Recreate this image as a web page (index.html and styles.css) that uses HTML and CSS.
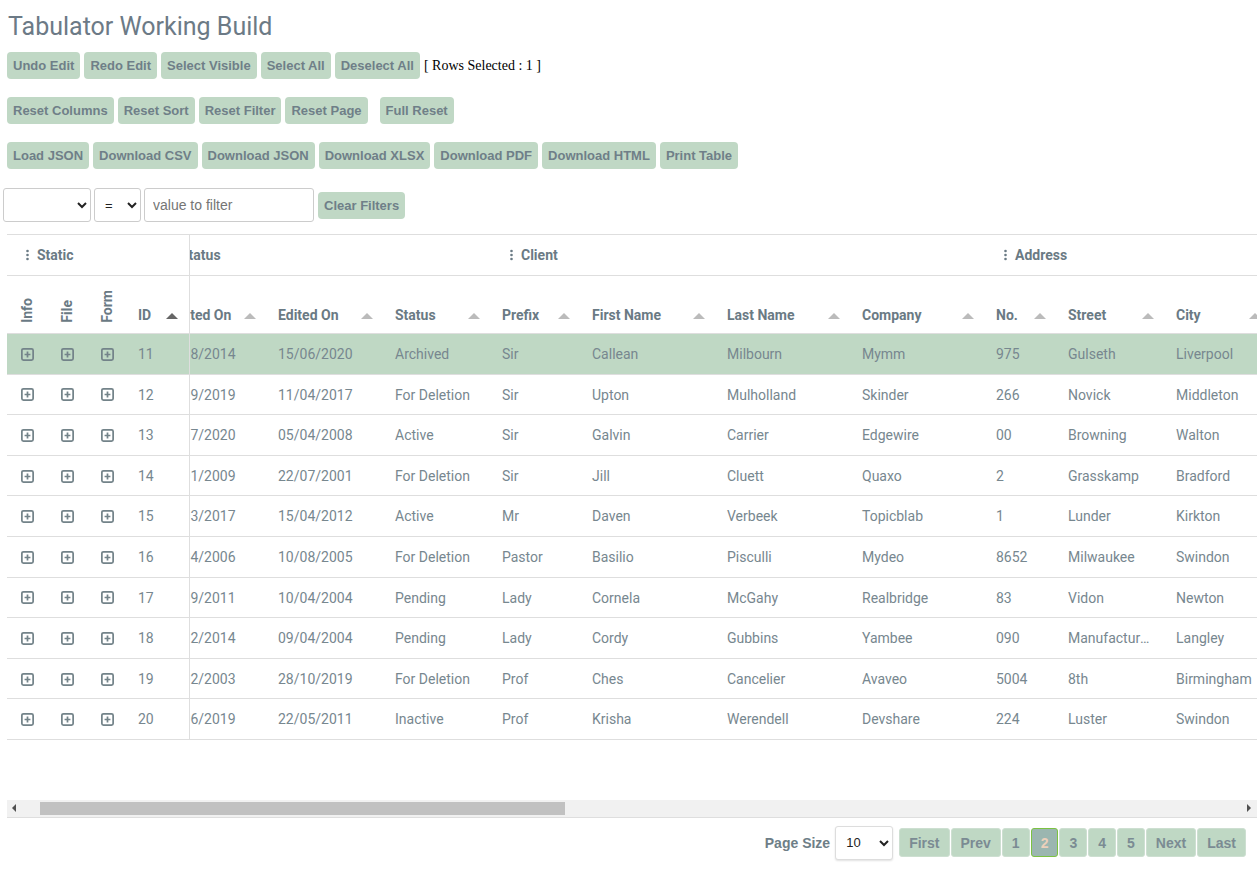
FILE: index.html
```html
<!DOCTYPE html>
<html>
<head>
<meta charset="utf-8">
<title>Tabulator Working Build</title>
<link rel="stylesheet" href="styles.css">
</head>
<body>
<div class="page">
  <h1 class="title">Tabulator Working Build</h1>
  <div class="toolbar">
    <div class="btn-row">
      <button class="btn">Undo Edit</button>
      <button class="btn">Redo Edit</button>
      <button class="btn">Select Visible</button>
      <button class="btn">Select All</button>
      <button class="btn">Deselect All</button>
      <span class="sel-count">[ Rows Selected : 1 ]</span>
    </div>
    <div class="btn-row">
      <button class="btn">Reset Columns</button>
      <button class="btn">Reset Sort</button>
      <button class="btn">Reset Filter</button>
      <button class="btn">Reset Page</button>
      <button class="btn btn-sep">Full Reset</button>
    </div>
    <div class="btn-row">
      <button class="btn">Load JSON</button>
      <button class="btn">Download CSV</button>
      <button class="btn">Download JSON</button>
      <button class="btn">Download XLSX</button>
      <button class="btn">Download PDF</button>
      <button class="btn">Download HTML</button>
      <button class="btn">Print Table</button>
    </div>
  </div>
  <div class="filter-row">
    <select class="fsel fsel-field"><option></option></select>
    <select class="fsel fsel-type"><option>=</option></select>
    <input class="finput" type="text" placeholder="value to filter">
    <button class="btn">Clear Filters</button>
  </div>

  <div class="table">
    <div class="panes">
      <div class="frozen">
        <div class="grp-row">
          <div class="grp g-static"><svg class="dots" width="3" height="12" viewBox="0 0 3 12"><circle cx="1.5" cy="2" r="1.3"/><circle cx="1.5" cy="6" r="1.3"/><circle cx="1.5" cy="10" r="1.3"/></svg>Static</div>
        </div>
        <div class="col-row">
          <div class="hcell vcell c-icon"><span class="vtitle">Info</span></div>
          <div class="hcell vcell c-icon"><span class="vtitle">File</span></div>
          <div class="hcell vcell c-icon"><span class="vtitle">Form</span></div>
          <div class="hcell c-id"><span>ID</span><i class="arrow arrow-active"></i></div>
        </div>
        <div class="row sel"><div class="icell"><svg class="plus" viewBox="0 0 12 12"><rect x="0.8" y="0.8" width="10.4" height="10.4" rx="1.5"/><path d="M3.3 6h5.4M6 3.3v5.4"/></svg></div><div class="icell"><svg class="plus" viewBox="0 0 12 12"><rect x="0.8" y="0.8" width="10.4" height="10.4" rx="1.5"/><path d="M3.3 6h5.4M6 3.3v5.4"/></svg></div><div class="icell"><svg class="plus" viewBox="0 0 12 12"><rect x="0.8" y="0.8" width="10.4" height="10.4" rx="1.5"/><path d="M3.3 6h5.4M6 3.3v5.4"/></svg></div><div class="cell c-id">11</div></div>
        <div class="row"><div class="icell"><svg class="plus" viewBox="0 0 12 12"><rect x="0.8" y="0.8" width="10.4" height="10.4" rx="1.5"/><path d="M3.3 6h5.4M6 3.3v5.4"/></svg></div><div class="icell"><svg class="plus" viewBox="0 0 12 12"><rect x="0.8" y="0.8" width="10.4" height="10.4" rx="1.5"/><path d="M3.3 6h5.4M6 3.3v5.4"/></svg></div><div class="icell"><svg class="plus" viewBox="0 0 12 12"><rect x="0.8" y="0.8" width="10.4" height="10.4" rx="1.5"/><path d="M3.3 6h5.4M6 3.3v5.4"/></svg></div><div class="cell c-id">12</div></div>
        <div class="row"><div class="icell"><svg class="plus" viewBox="0 0 12 12"><rect x="0.8" y="0.8" width="10.4" height="10.4" rx="1.5"/><path d="M3.3 6h5.4M6 3.3v5.4"/></svg></div><div class="icell"><svg class="plus" viewBox="0 0 12 12"><rect x="0.8" y="0.8" width="10.4" height="10.4" rx="1.5"/><path d="M3.3 6h5.4M6 3.3v5.4"/></svg></div><div class="icell"><svg class="plus" viewBox="0 0 12 12"><rect x="0.8" y="0.8" width="10.4" height="10.4" rx="1.5"/><path d="M3.3 6h5.4M6 3.3v5.4"/></svg></div><div class="cell c-id">13</div></div>
        <div class="row"><div class="icell"><svg class="plus" viewBox="0 0 12 12"><rect x="0.8" y="0.8" width="10.4" height="10.4" rx="1.5"/><path d="M3.3 6h5.4M6 3.3v5.4"/></svg></div><div class="icell"><svg class="plus" viewBox="0 0 12 12"><rect x="0.8" y="0.8" width="10.4" height="10.4" rx="1.5"/><path d="M3.3 6h5.4M6 3.3v5.4"/></svg></div><div class="icell"><svg class="plus" viewBox="0 0 12 12"><rect x="0.8" y="0.8" width="10.4" height="10.4" rx="1.5"/><path d="M3.3 6h5.4M6 3.3v5.4"/></svg></div><div class="cell c-id">14</div></div>
        <div class="row"><div class="icell"><svg class="plus" viewBox="0 0 12 12"><rect x="0.8" y="0.8" width="10.4" height="10.4" rx="1.5"/><path d="M3.3 6h5.4M6 3.3v5.4"/></svg></div><div class="icell"><svg class="plus" viewBox="0 0 12 12"><rect x="0.8" y="0.8" width="10.4" height="10.4" rx="1.5"/><path d="M3.3 6h5.4M6 3.3v5.4"/></svg></div><div class="icell"><svg class="plus" viewBox="0 0 12 12"><rect x="0.8" y="0.8" width="10.4" height="10.4" rx="1.5"/><path d="M3.3 6h5.4M6 3.3v5.4"/></svg></div><div class="cell c-id">15</div></div>
        <div class="row"><div class="icell"><svg class="plus" viewBox="0 0 12 12"><rect x="0.8" y="0.8" width="10.4" height="10.4" rx="1.5"/><path d="M3.3 6h5.4M6 3.3v5.4"/></svg></div><div class="icell"><svg class="plus" viewBox="0 0 12 12"><rect x="0.8" y="0.8" width="10.4" height="10.4" rx="1.5"/><path d="M3.3 6h5.4M6 3.3v5.4"/></svg></div><div class="icell"><svg class="plus" viewBox="0 0 12 12"><rect x="0.8" y="0.8" width="10.4" height="10.4" rx="1.5"/><path d="M3.3 6h5.4M6 3.3v5.4"/></svg></div><div class="cell c-id">16</div></div>
        <div class="row"><div class="icell"><svg class="plus" viewBox="0 0 12 12"><rect x="0.8" y="0.8" width="10.4" height="10.4" rx="1.5"/><path d="M3.3 6h5.4M6 3.3v5.4"/></svg></div><div class="icell"><svg class="plus" viewBox="0 0 12 12"><rect x="0.8" y="0.8" width="10.4" height="10.4" rx="1.5"/><path d="M3.3 6h5.4M6 3.3v5.4"/></svg></div><div class="icell"><svg class="plus" viewBox="0 0 12 12"><rect x="0.8" y="0.8" width="10.4" height="10.4" rx="1.5"/><path d="M3.3 6h5.4M6 3.3v5.4"/></svg></div><div class="cell c-id">17</div></div>
        <div class="row"><div class="icell"><svg class="plus" viewBox="0 0 12 12"><rect x="0.8" y="0.8" width="10.4" height="10.4" rx="1.5"/><path d="M3.3 6h5.4M6 3.3v5.4"/></svg></div><div class="icell"><svg class="plus" viewBox="0 0 12 12"><rect x="0.8" y="0.8" width="10.4" height="10.4" rx="1.5"/><path d="M3.3 6h5.4M6 3.3v5.4"/></svg></div><div class="icell"><svg class="plus" viewBox="0 0 12 12"><rect x="0.8" y="0.8" width="10.4" height="10.4" rx="1.5"/><path d="M3.3 6h5.4M6 3.3v5.4"/></svg></div><div class="cell c-id">18</div></div>
        <div class="row"><div class="icell"><svg class="plus" viewBox="0 0 12 12"><rect x="0.8" y="0.8" width="10.4" height="10.4" rx="1.5"/><path d="M3.3 6h5.4M6 3.3v5.4"/></svg></div><div class="icell"><svg class="plus" viewBox="0 0 12 12"><rect x="0.8" y="0.8" width="10.4" height="10.4" rx="1.5"/><path d="M3.3 6h5.4M6 3.3v5.4"/></svg></div><div class="icell"><svg class="plus" viewBox="0 0 12 12"><rect x="0.8" y="0.8" width="10.4" height="10.4" rx="1.5"/><path d="M3.3 6h5.4M6 3.3v5.4"/></svg></div><div class="cell c-id">19</div></div>
        <div class="row"><div class="icell"><svg class="plus" viewBox="0 0 12 12"><rect x="0.8" y="0.8" width="10.4" height="10.4" rx="1.5"/><path d="M3.3 6h5.4M6 3.3v5.4"/></svg></div><div class="icell"><svg class="plus" viewBox="0 0 12 12"><rect x="0.8" y="0.8" width="10.4" height="10.4" rx="1.5"/><path d="M3.3 6h5.4M6 3.3v5.4"/></svg></div><div class="icell"><svg class="plus" viewBox="0 0 12 12"><rect x="0.8" y="0.8" width="10.4" height="10.4" rx="1.5"/><path d="M3.3 6h5.4M6 3.3v5.4"/></svg></div><div class="cell c-id">20</div></div>
      </div>

      <div class="scroller">
        <div class="scroll-inner">
          <div class="grp-row">
            <div class="grp g-status"><svg class="dots" width="3" height="12" viewBox="0 0 3 12"><circle cx="1.5" cy="2" r="1.3"/><circle cx="1.5" cy="6" r="1.3"/><circle cx="1.5" cy="10" r="1.3"/></svg>Status</div>
            <div class="grp g-client"><svg class="dots" width="3" height="12" viewBox="0 0 3 12"><circle cx="1.5" cy="2" r="1.3"/><circle cx="1.5" cy="6" r="1.3"/><circle cx="1.5" cy="10" r="1.3"/></svg>Client</div>
            <div class="grp g-address"><svg class="dots" width="3" height="12" viewBox="0 0 3 12"><circle cx="1.5" cy="2" r="1.3"/><circle cx="1.5" cy="6" r="1.3"/><circle cx="1.5" cy="10" r="1.3"/></svg>Address</div>
          </div>
          <div class="col-row">
            <div class="hcell c-created"><span>Created On</span><i class="arrow"></i></div>
            <div class="hcell c-edited"><span>Edited On</span><i class="arrow"></i></div>
            <div class="hcell c-status"><span>Status</span><i class="arrow"></i></div>
            <div class="hcell c-prefix"><span>Prefix</span><i class="arrow"></i></div>
            <div class="hcell c-first"><span>First Name</span><i class="arrow"></i></div>
            <div class="hcell c-last"><span>Last Name</span><i class="arrow"></i></div>
            <div class="hcell c-company"><span>Company</span><i class="arrow"></i></div>
            <div class="hcell c-no"><span>No.</span><i class="arrow"></i></div>
            <div class="hcell c-street"><span>Street</span><i class="arrow"></i></div>
            <div class="hcell c-city"><span>City</span><i class="arrow"></i></div>
          </div>
          <div class="row sel"><div class="cell c-created">12/08/2014</div><div class="cell c-edited">15/06/2020</div><div class="cell c-status">Archived</div><div class="cell c-prefix">Sir</div><div class="cell c-first">Callean</div><div class="cell c-last">Milbourn</div><div class="cell c-company">Mymm</div><div class="cell c-no">975</div><div class="cell c-street">Gulseth</div><div class="cell c-city">Liverpool</div></div>
          <div class="row"><div class="cell c-created">14/09/2019</div><div class="cell c-edited">11/04/2017</div><div class="cell c-status">For Deletion</div><div class="cell c-prefix">Sir</div><div class="cell c-first">Upton</div><div class="cell c-last">Mulholland</div><div class="cell c-company">Skinder</div><div class="cell c-no">266</div><div class="cell c-street">Novick</div><div class="cell c-city">Middleton</div></div>
          <div class="row"><div class="cell c-created">21/07/2020</div><div class="cell c-edited">05/04/2008</div><div class="cell c-status">Active</div><div class="cell c-prefix">Sir</div><div class="cell c-first">Galvin</div><div class="cell c-last">Carrier</div><div class="cell c-company">Edgewire</div><div class="cell c-no">00</div><div class="cell c-street">Browning</div><div class="cell c-city">Walton</div></div>
          <div class="row"><div class="cell c-created">23/01/2009</div><div class="cell c-edited">22/07/2001</div><div class="cell c-status">For Deletion</div><div class="cell c-prefix">Sir</div><div class="cell c-first">Jill</div><div class="cell c-last">Cluett</div><div class="cell c-company">Quaxo</div><div class="cell c-no">2</div><div class="cell c-street">Grasskamp</div><div class="cell c-city">Bradford</div></div>
          <div class="row"><div class="cell c-created">18/03/2017</div><div class="cell c-edited">15/04/2012</div><div class="cell c-status">Active</div><div class="cell c-prefix">Mr</div><div class="cell c-first">Daven</div><div class="cell c-last">Verbeek</div><div class="cell c-company">Topicblab</div><div class="cell c-no">1</div><div class="cell c-street">Lunder</div><div class="cell c-city">Kirkton</div></div>
          <div class="row"><div class="cell c-created">25/04/2006</div><div class="cell c-edited">10/08/2005</div><div class="cell c-status">For Deletion</div><div class="cell c-prefix">Pastor</div><div class="cell c-first">Basilio</div><div class="cell c-last">Pisculli</div><div class="cell c-company">Mydeo</div><div class="cell c-no">8652</div><div class="cell c-street">Milwaukee</div><div class="cell c-city">Swindon</div></div>
          <div class="row"><div class="cell c-created">13/09/2011</div><div class="cell c-edited">10/04/2004</div><div class="cell c-status">Pending</div><div class="cell c-prefix">Lady</div><div class="cell c-first">Cornela</div><div class="cell c-last">McGahy</div><div class="cell c-company">Realbridge</div><div class="cell c-no">83</div><div class="cell c-street">Vidon</div><div class="cell c-city">Newton</div></div>
          <div class="row"><div class="cell c-created">16/02/2014</div><div class="cell c-edited">09/04/2004</div><div class="cell c-status">Pending</div><div class="cell c-prefix">Lady</div><div class="cell c-first">Cordy</div><div class="cell c-last">Gubbins</div><div class="cell c-company">Yambee</div><div class="cell c-no">090</div><div class="cell c-street">Manufacturers</div><div class="cell c-city">Langley</div></div>
          <div class="row"><div class="cell c-created">11/02/2003</div><div class="cell c-edited">28/10/2019</div><div class="cell c-status">For Deletion</div><div class="cell c-prefix">Prof</div><div class="cell c-first">Ches</div><div class="cell c-last">Cancelier</div><div class="cell c-company">Avaveo</div><div class="cell c-no">5004</div><div class="cell c-street">8th</div><div class="cell c-city">Birmingham</div></div>
          <div class="row"><div class="cell c-created">27/06/2019</div><div class="cell c-edited">22/05/2011</div><div class="cell c-status">Inactive</div><div class="cell c-prefix">Prof</div><div class="cell c-first">Krisha</div><div class="cell c-last">Werendell</div><div class="cell c-company">Devshare</div><div class="cell c-no">224</div><div class="cell c-street">Luster</div><div class="cell c-city">Swindon</div></div>
        </div>
      </div>
    </div>

    <div class="hscroll">
      <div class="sb-btn sb-left"><i class="tri-left"></i></div>
      <div class="sb-thumb"></div>
      <div class="sb-btn sb-right"><i class="tri-right"></i></div>
    </div>

    <div class="footer">
      <span class="ps-label">Page Size</span>
      <select class="ps-select"><option>10</option></select>
      <div class="pager">
        <button class="pg-btn">First</button>
        <button class="pg-btn">Prev</button>
        <button class="pg-btn">1</button>
        <button class="pg-btn active">2</button>
        <button class="pg-btn">3</button>
        <button class="pg-btn">4</button>
        <button class="pg-btn">5</button>
        <button class="pg-btn">Next</button>
        <button class="pg-btn">Last</button>
      </div>
    </div>
  </div>
</div>
</body>
</html>
```

FILE: styles.css
```css
* { box-sizing: border-box; }

body {
  margin: 0;
  background: #fff;
  font-family: Roboto, "Liberation Sans", sans-serif;
  overflow: hidden;
}

.page { padding-left: 7px; }

.title {
  margin: 11px 0 0 1px;
  font-size: 25px;
  line-height: 31px;
  font-weight: 400;
  color: #6c7a86;
}

.toolbar {
  display: flex;
  flex-direction: column;
  gap: 18px;
  margin-top: 10px;
}

.btn-row {
  display: flex;
  align-items: center;
  gap: 4px;
}

.btn {
  height: 27px;
  padding: 0 6px;
  border: none;
  border-radius: 4px;
  background: #c0d8c5;
  color: #6f7f88;
  font: bold 13px "Liberation Sans", Arial, sans-serif;
  cursor: pointer;
}

.btn-sep { margin-left: 8px; }

.sel-count {
  font: 14px "Liberation Serif", "Times New Roman", serif;
  color: #000;
}

.filter-row {
  display: flex;
  align-items: center;
  gap: 3px;
  margin-top: 19px;
  margin-left: -4px;
}

.filter-row .btn { margin-left: 1px; }

.fsel {
  height: 34px;
  border: 1px solid #ccc;
  border-radius: 3px;
  background: #fff;
  color: #222;
  font: 13px "Liberation Sans", Arial, sans-serif;
}

.fsel-field { width: 88px; }
.fsel-type { width: 47px; padding-left: 6px; }

.finput {
  width: 170px;
  height: 34px;
  border: 1px solid #ccc;
  border-radius: 3px;
  padding: 0 8px;
  font: 14px "Liberation Sans", Arial, sans-serif;
  color: #333;
}

.finput::placeholder { color: #757575; }

/* table */
.table {
  margin-top: 12px;
  width: 1250px;
  border-top: 1px solid #dedede;
}

.panes { display: flex; }

.frozen {
  flex: none;
  width: 183px;
  border-right: 1px solid #dedede;
}

.scroller {
  flex: 1;
  min-width: 0;
  overflow: hidden;
}

.scroll-inner {
  width: 1122px;
  margin-left: -40px;
}

.grp-row {
  display: flex;
  height: 41px;
  border-bottom: 1px solid #dedede;
}

.grp {
  flex: none;
  display: flex;
  align-items: center;
  padding-left: 19px;
  font-size: 14px;
  font-weight: 700;
  color: #6a7a84;
  white-space: nowrap;
}

.dots { fill: #6a7a84; margin-right: 8px; }

.g-static { width: 182px; }
.g-status { width: 341px; }
.g-client { width: 494px; }
.g-address { width: 287px; }

.col-row {
  display: flex;
  height: 58px;
  border-bottom: 1px solid #dedede;
}

.hcell {
  flex: none;
  display: flex;
  align-items: center;
  justify-content: space-between;
  align-self: flex-end;
  padding: 0 11px 9px;
  font-size: 14px;
  line-height: 17px;
  font-weight: 700;
  color: #6a7a84;
  white-space: nowrap;
}

.vcell {
  height: 100%;
  align-items: flex-end;
  justify-content: center;
  padding: 0 0 10px;
}

.vtitle {
  writing-mode: vertical-rl;
  transform: rotate(180deg);
  line-height: 17px;
}

.arrow {
  display: block;
  width: 0;
  height: 0;
  border-left: 6px solid transparent;
  border-right: 6px solid transparent;
  border-bottom: 6px solid #bbbbbb;
}

.arrow-active { border-bottom-color: #666; }

.row {
  display: flex;
  height: 40.6px;
  border-bottom: 1px solid #dedede;
}

.row.sel { background: #bfd8c4; }

.icell {
  flex: none;
  width: 40px;
  display: flex;
  align-items: center;
  justify-content: center;
  padding-top: 1px;
}

.plus {
  width: 13px;
  height: 13px;
  fill: none;
  stroke: #738389;
  stroke-width: 1.6;
}

.cell {
  flex: none;
  padding: 1px 11px 0;
  font-size: 14px;
  line-height: 39px;
  color: #77878f;
  white-space: nowrap;
  overflow: hidden;
  text-overflow: ellipsis;
}

.c-icon { width: 40px; }
.c-id { width: 62px; }
.c-created, .c-edited { width: 117px; }
.c-status { width: 107px; }
.c-prefix { width: 90px; }
.c-first, .c-last { width: 135px; }
.c-company { width: 134px; }
.c-no { width: 72px; }
.c-street { width: 108px; }
.c-city { width: 107px; }

/* horizontal scrollbar */
.hscroll {
  display: flex;
  align-items: center;
  height: 17px;
  margin-top: 60px;
  background: #f1f1f1;
}

.sb-btn {
  flex: none;
  width: 17px;
  height: 17px;
  display: flex;
  align-items: center;
}

.sb-left { padding-left: 5px; }
.sb-right { margin-left: auto; padding-left: 7px; }

.tri-left {
  width: 0;
  height: 0;
  border-top: 4px solid transparent;
  border-bottom: 4px solid transparent;
  border-right: 4px solid #505050;
}

.tri-right {
  width: 0;
  height: 0;
  border-top: 4px solid transparent;
  border-bottom: 4px solid transparent;
  border-left: 4px solid #505050;
}

.sb-thumb {
  flex: none;
  margin-left: 16px;
  width: 525px;
  height: 13px;
  background: #c1c1c1;
}

/* footer */
.footer {
  display: flex;
  align-items: center;
  justify-content: flex-end;
  padding: 8px 11px;
  border-top: 1px solid #dedede;
}

.ps-label {
  margin-right: 5px;
  font: bold 14px "Liberation Sans", Arial, sans-serif;
  color: #6e7e87;
}

.ps-select {
  width: 58px;
  height: 34px;
  margin-right: 6px;
  padding-left: 6px;
  border: 1px solid #ddd;
  border-radius: 3px;
  background: #fff;
  box-shadow: 0 1px 2px rgba(0, 0, 0, 0.12);
  font: 13px "Liberation Sans", Arial, sans-serif;
  color: #222;
}

.pager {
  display: flex;
  gap: 1px;
}

.pg-btn {
  height: 29px;
  padding: 0 9px;
  border: 1px solid #cddfd1;
  border-radius: 3px;
  background: #bfd8c4;
  color: #7b8b93;
  font: bold 14px "Liberation Sans", Arial, sans-serif;
}

.pg-btn.active {
  background: #9bb6b0;
  border-color: #7cc242;
  color: #ecd0bb;
}
```
